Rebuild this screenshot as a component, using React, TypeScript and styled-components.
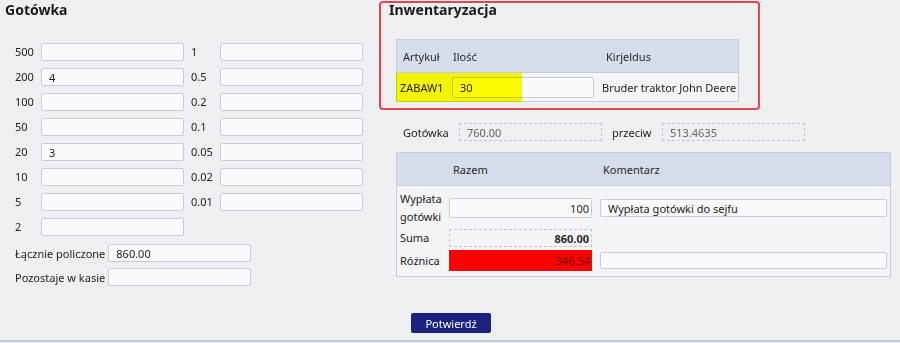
import React from 'react';
import styled, { createGlobalStyle } from 'styled-components';

const GlobalStyle = createGlobalStyle`
  html, body { margin: 0; padding: 0; background: #eeeff1; }
  body {
    font-family: "Noto Sans", "Open Sans", sans-serif;
    font-size: 11px;
    color: #222;
  }
  * { box-sizing: border-box; }
`;

const Page = styled.div`
  display: flex;
  height: 342px;
  border-bottom: 2px solid #c4cbd3;
`;

const LeftCol = styled.section`
  width: 379px;
  flex: none;
  padding: 3px 0 0 5px;
`;

const Heading = styled.h2`
  margin: 0;
  font-size: 14px;
  line-height: 14px;
  font-weight: 700;
  color: #1a1a1a;
`;

const DenomGrid = styled.div`
  display: grid;
  grid-template-columns: 26px 143px 36px 143px;
  grid-auto-rows: 18px;
  row-gap: 7px;
  align-items: center;
  margin: 26px 0 0 10px;
`;

const DenomLabel = styled.span<{ $inner?: boolean }>`
  padding-left: ${(p) => (p.$inner ? '7px' : '0')};
  line-height: 18px;
  white-space: nowrap;
`;

const TextBox = styled.input<{ $w: number; $h: number; $right?: boolean }>`
  width: ${(p) => p.$w}px;
  height: ${(p) => p.$h}px;
  margin: 0;
  padding: ${(p) => (p.$right ? '0 2px 0 7px' : '0 7px')};
  border: 1px solid #c9cdd3;
  border-radius: 2px;
  background: #fafafd;
  font: inherit;
  color: #1a1a1a;
  text-align: ${(p) => (p.$right ? 'right' : 'left')};
  outline: none;
`;

const SummaryList = styled.div`
  display: flex;
  flex-direction: column;
  gap: 6px;
  margin: 8px 0 0 10px;
`;

const SummaryRow = styled.div`
  display: flex;
  align-items: center;
  gap: 3px;
`;

const RightCol = styled.section`
  flex: 1;
  display: flex;
  flex-direction: column;
  align-items: flex-start;
  padding-top: 1px;
`;

const MarkedBox = styled.div`
  width: 381px;
  border: 2px solid #e8434b;
  border-radius: 4px;
  padding: 0 0 6px 8px;
`;

const Table = styled.div<{ $w: number }>`
  position: relative;
  width: ${(p) => p.$w}px;
  border: 1px solid #c6cbd5;
  background: #f3f4f6;
`;

const InvTable = styled(Table)`
  margin: 22px 0 0 7px;
`;

const HeadRow = styled.div<{ $cols: string }>`
  display: grid;
  grid-template-columns: ${(p) => p.$cols};
  align-items: center;
  height: 33px;
  background: #d6dce9;
  border-bottom: 1px solid #c6cbd5;
`;

const HeadCell = styled.div<{ $pad: number }>`
  padding-left: ${(p) => p.$pad}px;
  color: #2a2a2a;
  white-space: nowrap;
`;

const InvRow = styled.div`
  display: grid;
  grid-template-columns: 52px 149px 1fr;
  align-items: center;
  height: 28px;
`;

const Cell = styled.div<{ $pad: number }>`
  padding-left: ${(p) => p.$pad}px;
  white-space: nowrap;
  display: flex;
  align-items: center;
`;

const Marker = styled.div`
  position: absolute;
  left: -1px;
  top: 33px;
  width: 126px;
  height: 29px;
  background: #ffff00;
  mix-blend-mode: multiply;
  pointer-events: none;
`;

const CashRow = styled.div`
  display: grid;
  grid-template-columns: 63px 143px 60px 143px;
  align-items: center;
  height: 18px;
  margin: 13px 0 0 17px;
`;

const CashLabel = styled.span<{ $pad: number }>`
  padding-left: ${(p) => p.$pad}px;
  white-space: nowrap;
`;

const DashedBox = styled.div<{ $bold?: boolean; $right?: boolean }>`
  height: 18px;
  width: 143px;
  border: 1px dashed #c3c7cd;
  display: flex;
  align-items: center;
  justify-content: ${(p) => (p.$right ? 'flex-end' : 'flex-start')};
  padding: ${(p) => (p.$right ? '0 2px 0 0' : '0 0 0 7px')};
  color: ${(p) => (p.$bold ? '#2a2a2a' : '#666')};
  font-weight: ${(p) => (p.$bold ? 700 : 400)};
`;

const SumTable = styled(Table)`
  margin: 11px 0 0 17px;
`;

const SumBody = styled.div`
  display: grid;
  grid-template-columns: 52px 151px 1fr;
  grid-template-rows: 36px 18px 21px;
  row-gap: 3px;
  align-items: center;
  padding: 4px 0 5px;
`;

const RowLabel = styled.div`
  padding-left: 3px;
  line-height: 18px;
`;

const DiffBox = styled.div`
  width: 143px;
  height: 21px;
  background: #ff0000;
  color: #6e0000;
  display: flex;
  align-items: center;
  justify-content: flex-end;
  padding-right: 2px;
`;

const ConfirmButton = styled.button`
  margin: 36px 0 0 32px;
  width: 80px;
  height: 20px;
  padding: 0;
  border: none;
  border-radius: 2px;
  background: #1b237e;
  color: #fff;
  font: inherit;
  font-size: 11px;
  cursor: pointer;
`;

const leftDenoms: [string, string][] = [
  ['500', ''], ['200', '4'], ['100', ''], ['50', ''],
  ['20', '3'], ['10', ''], ['5', ''], ['2', ''],
];
const rightDenoms = ['1', '0.5', '0.2', '0.1', '0.05', '0.02', '0.01'];

export default function App() {
  return (
    <>
      <GlobalStyle />
      <Page>
        <LeftCol>
          <Heading>Gotówka</Heading>
          <DenomGrid>
            {leftDenoms.map(([d, v], i) => (
              <React.Fragment key={d}>
                <DenomLabel>{d}</DenomLabel>
                <TextBox $w={143} $h={18} defaultValue={v} />
                {rightDenoms[i] !== undefined && (
                  <>
                    <DenomLabel $inner>{rightDenoms[i]}</DenomLabel>
                    <TextBox $w={143} $h={18} defaultValue="" />
                  </>
                )}
              </React.Fragment>
            ))}
          </DenomGrid>
          <SummaryList>
            <SummaryRow>
              <span>Łącznie policzone</span>
              <TextBox $w={143} $h={18} defaultValue="860.00" />
            </SummaryRow>
            <SummaryRow>
              <span>Pozostaje w kasie</span>
              <TextBox $w={143} $h={18} defaultValue="" />
            </SummaryRow>
          </SummaryList>
        </LeftCol>

        <RightCol>
          <MarkedBox>
            <Heading>Inwentaryzacja</Heading>
            <InvTable $w={343}>
              <HeadRow $cols="52px 149px 1fr">
                <HeadCell $pad={6}>Artykuł</HeadCell>
                <HeadCell $pad={4}>Ilość</HeadCell>
                <HeadCell $pad={8}>Kirjeldus</HeadCell>
              </HeadRow>
              <InvRow>
                <Cell $pad={3}>ZABAW1</Cell>
                <Cell $pad={3}>
                  <TextBox $w={142} $h={21} defaultValue="30" />
                </Cell>
                <Cell $pad={4}>Bruder traktor John Deere</Cell>
              </InvRow>
              <Marker />
            </InvTable>
          </MarkedBox>

          <CashRow>
            <CashLabel $pad={7}>Gotówka</CashLabel>
            <DashedBox>760.00</DashedBox>
            <CashLabel $pad={10}>przeciw</CashLabel>
            <DashedBox>513.4635</DashedBox>
          </CashRow>

          <SumTable $w={495}>
            <HeadRow $cols="52px 151px 1fr">
              <HeadCell $pad={0} />
              <HeadCell $pad={4}>Razem</HeadCell>
              <HeadCell $pad={3}>Komentarz</HeadCell>
            </HeadRow>
            <SumBody>
              <RowLabel>
                Wypłata
                <br />
                gotówki
              </RowLabel>
              <TextBox $w={143} $h={20} $right defaultValue="100" />
              <TextBox $w={287} $h={18} defaultValue="Wypłata gotówki do sejfu" />

              <RowLabel>Suma</RowLabel>
              <DashedBox $bold $right>860.00</DashedBox>
              <span />

              <RowLabel>Różnica</RowLabel>
              <DiffBox>346.54</DiffBox>
              <TextBox $w={287} $h={17} defaultValue="" />
            </SumBody>
          </SumTable>

          <ConfirmButton type="button">Potwierdź</ConfirmButton>
        </RightCol>
      </Page>
    </>
  );
}
